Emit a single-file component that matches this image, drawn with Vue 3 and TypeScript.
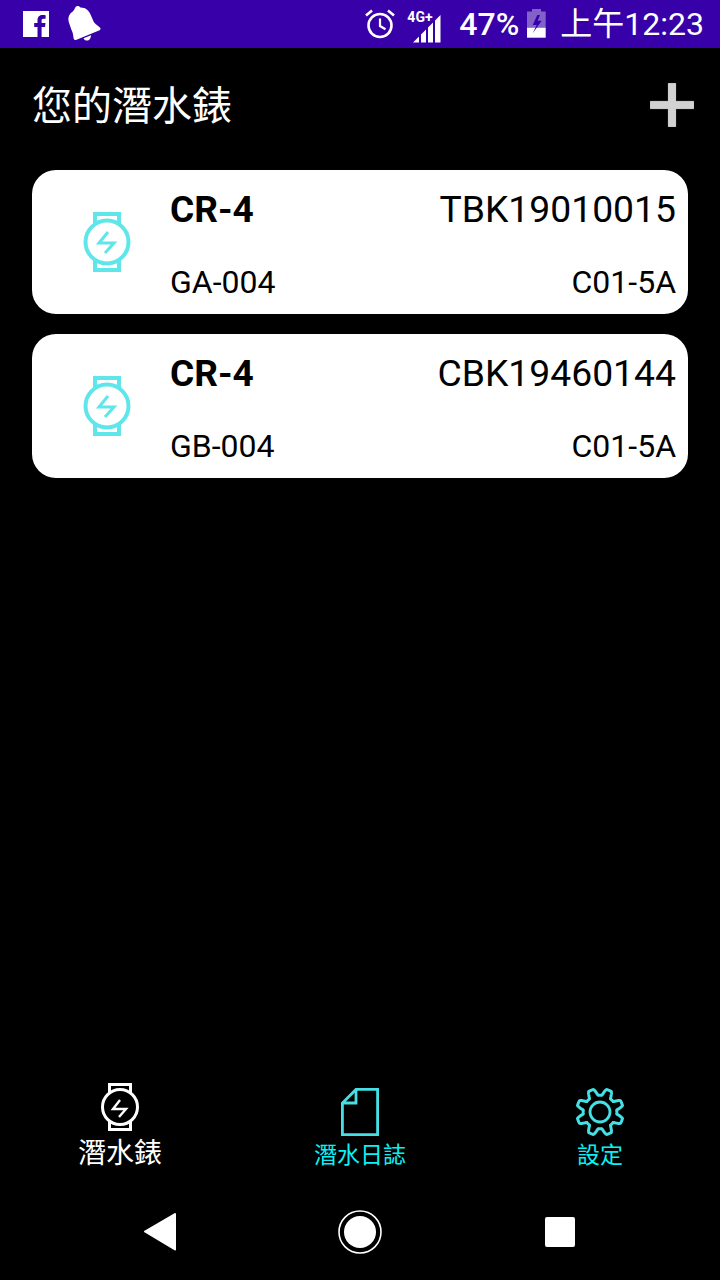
<script setup lang="ts">
interface Watch { name: string; serial: string; model: string; code: string }
const watches: Watch[] = [
  { name: 'CR-4', serial: 'TBK19010015', model: 'GA-004', code: 'C01-5A' },
  { name: 'CR-4', serial: 'CBK19460144', model: 'GB-004', code: 'C01-5A' },
]

// Eight rounded gear lobes, sampled around the centre of a 50x48 box.
const gearPath = (() => {
  const pts: string[] = []
  for (let i = 0; i < 240; i++) {
    const a = (i / 240) * Math.PI * 2
    const wave = Math.max(-1, Math.min(1, 1.7 * Math.cos(8 * (a - Math.PI / 8))))
    const r = 20.1 + 3.3 * wave
    pts.push(`${(25 + r * Math.cos(a)).toFixed(2)} ${(24 + r * Math.sin(a)).toFixed(2)}`)
  }
  return `M${pts.join('L')}Z`
})()
</script>

<template>
  <div class="screen">
    <div class="status">
      <svg width="26" height="26" viewBox="0 0 26 26">
        <path fill="#fff" d="M0 0H26V26H18.6V16H22L22.5 12H18.6V9.6C18.6 8.4 19 7.7 20.6 7.7H22.6V4.2C22.2 4.1 21 4 19.6 4 16.6 4 14.5 5.8 14.5 9.2V12H11.2V16H14.5V26H0Z"/>
      </svg>
      <svg class="bell" width="34" height="36" viewBox="0 0 34 36">
        <g fill="#fff">
          <path d="M8 .5C9.500 -.5 11.500 0 12.400 1.400 17 1.200 21 4 22.500 8.500L25.600 15.600C26.200 17 28.500 19 31.600 21.200 33 22.300 32.800 23.600 31.600 24.200L8.500 33.800C7 34.400 6 33.800 5.600 32.200 5 28 4.500 25.500 3.400 23.800L1 16.800C-.5 12.500 .5 8 4.800 5.400 6 4.500 6.800 2 8 .5Z"/>
          <path d="M15.500 32.200 23 29.200C23 32 21.200 34.600 19 34.600 17.400 34.600 16.200 33.600 15.500 32.200Z"/>
        </g>
      </svg>
      <span class="spacer"></span>
      <svg class="alarm" width="30" height="30" viewBox="0 0 30 30">
        <circle cx="15" cy="16.500" r="11.500" fill="none" stroke="#fff" stroke-width="2.600"/>
        <path d="M15 9.500V17L20.500 20.200" fill="none" stroke="#fff" stroke-width="2.200"/>
        <path d="M1 6.500 7 1.500M29 6.500 23 1.500" fill="none" stroke="#fff" stroke-width="2.600"/>
      </svg>
      <div class="signal">
        <span class="net">4G+</span>
        <svg width="28" height="28" viewBox="0 0 28 28">
          <path fill="#fff" d="M0 27.500 6 21.500V27.500ZM8 19.500 13 14.500V27.500H8ZM15 12.500 20 7.500V27.500H15ZM22 5.500 27.500 0V27.500H22Z"/>
        </svg>
      </div>
      <span class="pct">47%</span>
      <svg class="batt" width="20" height="30" viewBox="0 0 20 30">
        <path fill="#fff" fill-opacity=".38" d="M5 0H14V2.500H18.700V18.700H0V2.500H5Z"/>
        <rect y="18.700" width="18.700" height="10" fill="#fff"/>
        <path fill="#3700a9" d="M10.300 6 5.700 16H9.700L5.700 24.300 14.700 11.700H10.700L13 6Z"/>
      </svg>
      <span class="clock">上午12:23</span>
    </div>

    <div class="head">
      <h1 class="title">您的潛水錶</h1>
      <svg width="44" height="44" viewBox="0 0 44 44">
        <path fill="#d2d2d2" stroke="#eee" stroke-width=".8" d="M18.400 .4H25.600V18.400H43.600V25.600H25.600V43.600H18.400V25.600H.4V18.400H18.400Z"/>
      </svg>
    </div>

    <main class="list">
      <article v-for="w in watches" :key="w.serial" class="card">
        <svg class="soft" width="50" height="60" viewBox="0 0 50 60">
          <g fill="none" stroke="#5fe6ea" stroke-width="4">
            <circle cx="25" cy="30" r="21.500"/>
            <path d="M13 12V2H37V12M13 48V58H37V48"/>
            <path d="M26 20 17 31H32L23 41" stroke-width="3"/>
          </g>
        </svg>
        <div class="info">
          <div class="row top">
            <strong class="name">{{ w.name }}</strong>
            <span class="serial">{{ w.serial }}</span>
          </div>
          <div class="row">
            <span class="sub">{{ w.model }}</span>
            <span class="sub">{{ w.code }}</span>
          </div>
        </div>
      </article>
    </main>

    <nav class="tabs">
      <div class="tab">
        <svg class="soft raised" width="40" height="48" viewBox="0 0 40 48">
          <g fill="none" stroke="#fff" stroke-width="3">
            <circle cx="20" cy="24" r="17.500"/>
            <path d="M9.500 10V1.500H30.500V10M9.500 38V46.500H30.500V38"/>
            <path d="M20 17 13 26H26L19 34" stroke-width="2.400"/>
          </g>
        </svg>
        <span class="lbl white">潛水錶</span>
      </div>
      <div class="tab">
        <svg class="soft" width="40" height="48" viewBox="0 0 40 48">
          <path fill="none" stroke="#46dfe3" stroke-width="2.800" d="M16 1.400H37.600V46.600H2.400V15ZM16 1.400V15H2.400"/>
        </svg>
        <span class="lbl cyan">潛水日誌</span>
      </div>
      <div class="tab">
        <svg class="soft" width="50" height="48" viewBox="0 0 50 48">
          <g fill="none" stroke="#46dfe3" stroke-width="3">
            <circle cx="25" cy="24" r="10" stroke-width="2.800"/>
            <path :d="gearPath"/>
          </g>
        </svg>
        <span class="lbl cyan">設定</span>
      </div>
    </nav>

    <div class="sysnav">
      <svg width="34" height="40" viewBox="0 0 34 40">
        <path fill="#fff" stroke="#fff" stroke-width="2" stroke-linejoin="round" d="M32 2 2 19.500 32 37.500Z"/>
      </svg>
      <svg width="44" height="44" viewBox="0 0 44 44">
        <circle cx="22" cy="22" r="21" fill="none" stroke="#fff" stroke-width="1.600"/>
        <circle cx="22" cy="22" r="16" fill="#fff"/>
      </svg>
      <svg width="30" height="30" viewBox="0 0 30 30">
        <rect width="30" height="30" rx="2" fill="#fff"/>
      </svg>
    </div>
  </div>
</template>

<style>
html, body { margin: 0; background: #000; }
</style>

<style scoped>
.screen {
  width: 720px;
  height: 1280px;
  display: flex;
  flex-direction: column;
  background: #000;
  color: #fff;
  overflow: hidden;
  font-family: Roboto, "Noto Sans CJK TC", sans-serif;
}
.soft { filter: blur(.45px); flex: none; }
.status {
  height: 48px;
  flex: none;
  display: flex;
  align-items: center;
  background: #3700a9;
  padding: 0 16px 0 23px;
}
.bell { margin-left: 19px; }
.spacer { flex: 1; }
.alarm { margin-right: 11px; }
.signal { position: relative; width: 35px; height: 38px; margin-right: 18px; }
.signal svg { position: absolute; right: 0; bottom: 0; }
.net {
  position: absolute;
  left: 1px;
  top: 4px;
  font-size: 14px;
  line-height: 16px;
  font-weight: 700;
  white-space: nowrap;
}
.pct { font-size: 32px; font-weight: 500; line-height: 48px; margin-right: 8px; }
.batt { margin-right: 13px; }
.clock { font-size: 32px; line-height: 48px; white-space: nowrap; }

.head {
  height: 122px;
  flex: none;
  display: flex;
  align-items: center;
  justify-content: space-between;
  padding: 0 26px 4px 32px;
  box-sizing: border-box;
}
.head svg { margin-bottom: 4px; }
.title { margin: 0; font-size: 40px; font-weight: 400; line-height: 56px; }

.list {
  flex: 1;
  display: flex;
  flex-direction: column;
  gap: 20px;
  padding: 0 32px;
}
.card {
  height: 144px;
  display: flex;
  align-items: center;
  background: #fff;
  color: #000;
  border-radius: 24px;
  padding: 0 12px 0 50px;
}
.info {
  flex: 1;
  height: 144px;
  margin-left: 39px;
  display: flex;
  flex-direction: column;
  justify-content: space-between;
  padding: 14px 0 8px;
  box-sizing: border-box;
}
.row { display: flex; justify-content: space-between; align-items: baseline; }
.name { font-size: 37px; font-weight: 700; line-height: 50px; margin-left: -1px; }
.serial { font-size: 37.300px; line-height: 50px; }
.sub { font-size: 32px; line-height: 48px; margin-left: -1px; }

.tabs {
  flex: none;
  height: 112px;
  box-sizing: border-box;
  padding-top: 16px;
  display: grid;
  grid-template-columns: repeat(3, 240px);
}
.tab {
  display: flex;
  flex-direction: column;
  align-items: center;
}
.raised { margin-top: -5px; }
.lbl { white-space: nowrap; }
.white { font-size: 28px; line-height: 40px; color: #fff; margin-top: 3px; }
.cyan { font-size: 23px; line-height: 34px; color: #0cf0f5; margin-top: 3px; }

.sysnav {
  flex: none;
  height: 96px;
  padding: 0 60px;
  display: grid;
  grid-template-columns: repeat(3, 200px);
  align-items: center;
  justify-items: center;
}
</style>
